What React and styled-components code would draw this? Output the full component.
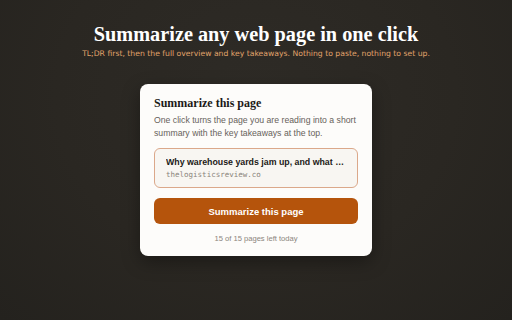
import React from "react";
import styled, { createGlobalStyle } from "styled-components";

const Global = createGlobalStyle`
  html, body { margin: 0; padding: 0; }
  body {
    width: 512px; height: 320px; overflow: hidden;
    background: radial-gradient(ellipse at 50% 30%, #2e2b26 0%, #2a2722 55%, #24221e 100%);
    font-family: "Liberation Sans", Arial, sans-serif;
  }
`;

const Page = styled.div`
  width: 512px;
  height: 320px;
  display: flex;
  flex-direction: column;
  align-items: center;
  padding-top: 20px;
  box-sizing: border-box;
`;

const Headline = styled.h1`
  margin: 0;
  font-family: "Liberation Serif", "Times New Roman", serif;
  font-weight: 700;
  font-size: 20.3px;
  line-height: 28px;
  color: #ffffff;
`;

const Tagline = styled.p`
  margin: 0;
  font-family: "DejaVu Sans", sans-serif;
  font-size: 7.7px;
  line-height: 12px;
  color: #e0a36b;
`;

const Card = styled.section`
  margin-top: 24px;
  width: 232px;
  box-sizing: border-box;
  background: #fdfcfa;
  border-radius: 8px;
  padding: 12px 14px 12px;
  box-shadow: 0 6px 18px rgba(0, 0, 0, 0.35);
`;

const CardTitle = styled.h2`
  margin: 0;
  font-family: "Liberation Serif", "Times New Roman", serif;
  font-weight: 700;
  font-size: 12px;
  line-height: 15px;
  color: #1c1a17;
`;

const CardText = styled.p`
  margin: 3px 0 0;
  font-size: 8.7px;
  line-height: 12.5px;
  color: #67625b;
`;

const PageBox = styled.div`
  margin-top: 9px;
  border: 1px solid #dba88a;
  border-radius: 6px;
  background: #f8f6f2;
  padding: 7px 10px 7px 11px;
  display: flex;
  flex-direction: column;
  gap: 1px;
`;

const PageTitle = styled.div`
  font-size: 8.8px;
  font-weight: 700;
  line-height: 12px;
  color: #1c1a17;
  white-space: nowrap;
  overflow: hidden;
  text-overflow: ellipsis;
`;

const PageUrl = styled.div`
  font-family: "DejaVu Sans Mono", "Liberation Mono", monospace;
  font-size: 7.5px;
  line-height: 11px;
  color: #8a847b;
`;

const Button = styled.button`
  display: block;
  margin-top: 10px;
  width: 100%;
  height: 26px;
  border: none;
  border-radius: 6px;
  background: #b5540c;
  color: #ffffff;
  font-family: "Liberation Sans", Arial, sans-serif;
  font-weight: 700;
  font-size: 9.5px;
  cursor: pointer;
`;

const Footnote = styled.p`
  margin: 9px 0 0;
  text-align: center;
  font-size: 7.6px;
  line-height: 11px;
  color: #8c867d;
`;

export default function App() {
  return (
    <>
      <Global />
      <Page>
        <Headline>Summarize any web page in one click</Headline>
        <Tagline>
          TL;DR first, then the full overview and key takeaways. Nothing to paste, nothing to set up.
        </Tagline>
        <Card>
          <CardTitle>Summarize this page</CardTitle>
          <CardText>
            One click turns the page you are reading into a short summary with the key takeaways at the top.
          </CardText>
          <PageBox>
            <PageTitle>Why warehouse yards jam up, and what …</PageTitle>
            <PageUrl>thelogisticsreview.co</PageUrl>
          </PageBox>
          <Button>Summarize this page</Button>
          <Footnote>15 of 15 pages left today</Footnote>
        </Card>
      </Page>
    </>
  );
}
